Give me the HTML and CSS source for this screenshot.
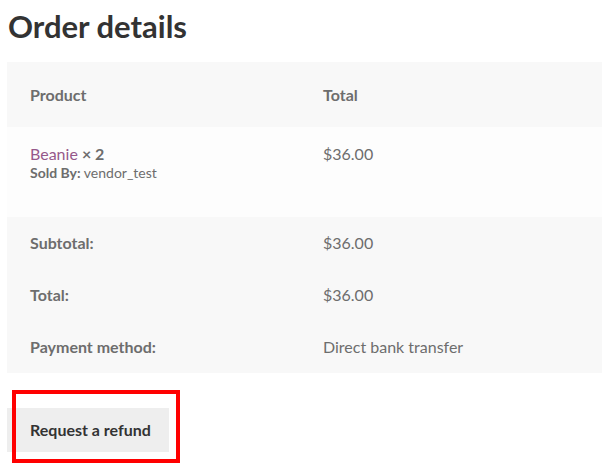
FILE: index.html
```html
<!DOCTYPE html>
<html lang="en">
<head>
<meta charset="utf-8">
<title>Order details</title>
<link rel="stylesheet" href="styles.css">
</head>
<body>
<section class="order">
  <h2 class="title">Order details</h2>
  <table class="details">
    <thead>
      <tr class="head-row">
        <th class="col-product">Product</th>
        <th class="col-total">Total</th>
      </tr>
    </thead>
    <tbody>
      <tr class="item-row">
        <td class="col-product">
          <div class="item-name"><a class="item-link" href="#">Beanie</a> <strong class="qty">× 2</strong></div>
          <div class="item-meta"><strong>Sold By:</strong> vendor_test</div>
        </td>
        <td class="col-total">$36.00</td>
      </tr>
    </tbody>
    <tfoot>
      <tr class="foot-row">
        <th class="col-product">Subtotal:</th>
        <td class="col-total">$36.00</td>
      </tr>
      <tr class="foot-row">
        <th class="col-product">Total:</th>
        <td class="col-total">$36.00</td>
      </tr>
      <tr class="foot-row">
        <th class="col-product">Payment method:</th>
        <td class="col-total">Direct bank transfer</td>
      </tr>
    </tfoot>
  </table>
  <div class="actions">
    <a class="refund-btn" href="#">Request a refund</a>
    <span class="highlight"></span>
  </div>
</section>
</body>
</html>
```
FILE: styles.css
```css
html, body {
  margin: 0;
  padding: 0;
  background: #ffffff;
}
body {
  font-family: Lato, "Liberation Sans", sans-serif;
  color: #6d6d6d;
  font-size: 16px;
  min-height: 475px;
}
.order {
  padding-left: 7px;
  padding-bottom: 20px;
}
.title {
  margin: 0;
  padding: 7px 0 0 1px;
  height: 62px;
  box-sizing: border-box;
  font-size: 31px;
  font-weight: 700;
  line-height: 38px;
  color: #333333;
}
.details {
  width: 595px;
  border-collapse: collapse;
  border-spacing: 0;
  table-layout: fixed;
}
.details th,
.details td {
  text-align: left;
  vertical-align: top;
  padding: 0 23px;
  line-height: 24px;
  box-sizing: border-box;
}
.details th {
  font-weight: 700;
}
.col-product {
  width: 293px;
}
.head-row {
  background: #f8f8f8;
}
.head-row th {
  height: 65px;
  vertical-align: middle;
}
.item-row {
  background: #fdfdfd;
}
.item-row td {
  height: 90px;
  padding-top: 15px;
}
.item-name {
  line-height: 24px;
}
.item-link {
  color: #96588a;
  text-decoration: none;
}
.qty {
  font-weight: 700;
}
.item-meta {
  font-size: 14px;
  line-height: 14px;
}
.foot-row {
  background: #f8f8f8;
}
.foot-row th,
.foot-row td {
  height: 52px;
  vertical-align: middle;
}
.actions {
  position: relative;
  margin-top: 35px;
  width: 162px;
}
.refund-btn {
  display: block;
  width: 162px;
  height: 44px;
  box-sizing: border-box;
  padding-left: 23px;
  background: #eeeeee;
  color: #333333;
  font-weight: 700;
  line-height: 44px;
  text-decoration: none;
}
.highlight {
  position: absolute;
  left: 5px;
  top: -18px;
  width: 168px;
  height: 73px;
  box-sizing: border-box;
  border: 4px solid #ff0000;
}
```
